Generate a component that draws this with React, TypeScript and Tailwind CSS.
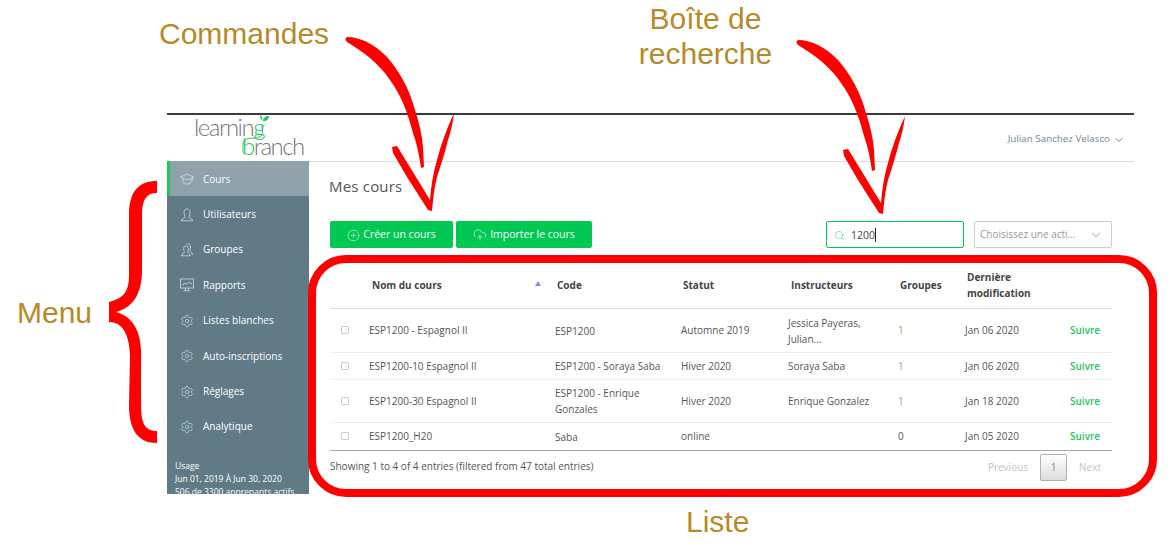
import { ChevronDown, CirclePlus, CloudUpload, Search, Settings } from "lucide-react";
import type { ReactNode } from "react";

function CapIcon() {
  return (
    <svg width="14" height="14" viewBox="0 0 14 14" fill="none" stroke="currentColor" strokeWidth="0.8">
      <path d="M0.5 5 L7 2 L13.5 5 L7 8 Z" />
      <path d="M3 6.5 V10.5 C5 12.5 9 12.5 11 10.5 V6.5" />
      <path d="M12.5 5.5 V8.5" />
    </svg>
  );
}

function UserIcon() {
  return (
    <svg width="14" height="14" viewBox="0 0 14 14" fill="none" stroke="currentColor" strokeWidth="0.8">
      <path d="M7 1 C4.8 1 4 2.6 4 4.5 C4 6.5 5 8 5 9 C5 10.5 1.5 10.5 1.2 12.8 H12.8 C12.5 10.5 9 10.5 9 9 C9 8 10 6.5 10 4.5 C10 2.6 9.2 1 7 1 Z" />
    </svg>
  );
}

function GroupIcon() {
  return (
    <svg width="14" height="14" viewBox="0 0 14 14" fill="none" stroke="currentColor" strokeWidth="0.8">
      <path d="M6 3 C4.2 3 3.6 4.3 3.6 5.8 C3.6 7.4 4.4 8 4.4 9.2 C4.4 10.4 1.8 10.4 1.4 12.8 H10.4 C10 10.4 7.6 10.4 7.6 9.2 C7.6 8 8.4 7.4 8.4 5.8 C8.4 4.3 7.8 3 6 3 Z" />
      <path d="M6.5 1.2 C7.2 0.8 10.6 0.6 10.6 4 C10.6 5.6 9.8 6.4 9.8 7.6 C9.8 8.8 12.2 9 12.7 11.4 H11.6" />
    </svg>
  );
}

function MonitorIcon() {
  return (
    <svg width="14" height="14" viewBox="0 0 14 14" fill="none" stroke="currentColor" strokeWidth="0.8">
      <rect x="0.5" y="1" width="13" height="9" />
      <path d="M2 7.5 L5 5 L7 6.5 L9 4 L12 6" />
      <path d="M5.5 10 V12.5 M8.5 10 V12.5 M3.5 12.8 H10.5" />
    </svg>
  );
}

const menu: [string, ReactNode][] = [
  ["Cours", <CapIcon />],
  ["Utilisateurs", <UserIcon />],
  ["Groupes", <GroupIcon />],
  ["Rapports", <MonitorIcon />],
  ["Listes blanches", <Settings size={14} strokeWidth={1.1} />],
  ["Auto-inscriptions", <Settings size={14} strokeWidth={1.1} />],
  ["Réglages", <Settings size={14} strokeWidth={1.1} />],
  ["Analytique", <Settings size={14} strokeWidth={1.1} />],
];

const rows = [
  { h: "h-[44px]", name: "ESP1200 - Espagnol II", code: "ESP1200", statut: "Automne 2019", inst: "Jessica Payeras, Julian...", groupes: "1", date: "Jan 06 2020" },
  { h: "h-[27px]", name: "ESP1200-10 Espagnol II", code: "ESP1200 - Soraya Saba", statut: "Hiver 2020", inst: "Soraya Saba", groupes: "1", date: "Jan 06 2020" },
  { h: "h-[43px]", name: "ESP1200-30 Espagnol II", code: "ESP1200 - Enrique Gonzales", statut: "Hiver 2020", inst: "Enrique Gonzalez", groupes: "1", date: "Jan 18 2020" },
  { h: "h-[28px]", name: "ESP1200_H20", code: "Saba", statut: "online", inst: "", groupes: "0", date: "Jan 05 2020" },
];

function Logo() {
  return (
    <svg width="116" height="46" viewBox="0 0 116 46" className="ml-[26px]">
      <text x="1" y="21" fontFamily="Lato" fontWeight="300" fontSize="24" letterSpacing="-1.5" fill="#777">
        learnin<tspan fill="#22c55e">g</tspan>
      </text>
      <text x="49" y="40" fontFamily="Lato" fontWeight="300" fontSize="24" letterSpacing="-1.5" fill="#777">
        <tspan fill="#22c55e">b</tspan>ranch
      </text>
      <path d="M69 10 C70 20 70 22 62 23 C55 23 50 24 50 30 V38" fill="none" stroke="#22c55e" strokeWidth="1" />
      <path d="M70 6 C70 3 72 1 76 1 C76 4 74 6 70 6 Z M69 5 C68 4 67 3 67 0 C69 1 70 3 69 5 Z" fill="#22c55e" />
    </svg>
  );
}

// same hand-drawn arrow for both callouts
function Arrow({ dx, dy }: { dx: number; dy: number }) {
  return (
    <g transform={`translate(${dx} ${dy})`} fill="#ff0000">
      <path d="M347 37 C354 37 361 39 367 42 C375 46 381 51 387 57 C393 64 398 71 403 80 C408 89 412 99 415 110 C419 122 422 135 423 147 L424 167 L421 168 C419 155 417 144 413 133 C410 122 407 112 403 103 C399 94 395 87 390 80 C384 71 377 64 370 58 C363 52 355 47 347 42 C345 40 345 38 347 37 Z" />
      <path d="M392 147 L397 146 L430 200 C431 187 433 173 437 160 C441 144 447 128 454 113 C453 122 451 131 448 140 C445 152 441 165 437 177 C434 188 433 200 432 211 L428 210 L407 177 L393 153 Z" />
    </g>
  );
}

export default function App() {
  return (
    <div className="relative h-[552px] w-[1175px] overflow-hidden bg-white font-['Open_Sans',sans-serif]">
      <div className="ml-[167px] w-[967px] pt-[113px]">
        <header className="flex h-[48px] items-center justify-between border-t-2 border-[#3a3a3a] pr-[9px]">
          <Logo />
          <div className="mt-[3px] flex items-center gap-[3px] text-[9.8px] text-[#6f8894]">
            Julian Sanchez Velasco
            <ChevronDown size={12} strokeWidth={1.5} className="text-[#555555]" />
          </div>
        </header>

        <div className="flex">
          <aside className="flex h-[333px] w-[142px] shrink-0 flex-col overflow-hidden bg-[#607a86] text-[10px] text-white">
            {menu.map(([label, icon], i) => (
              <div
                key={label}
                className={
                  i === 0
                    ? "flex h-[35.4px] shrink-0 items-center gap-[9px] border-l-[3px] border-[#22c55e] bg-[#8fa1aa] pl-[10px] pt-[1px]"
                    : "flex h-[35.4px] shrink-0 items-center gap-[9px] pl-[13px] pt-[1px]"
                }
              >
                <span className="text-[#d5dde1]">{icon}</span>
                {label}
              </div>
            ))}
            <div className="mt-[15px] pl-[8px] text-[8.5px] leading-[13px]">
              <p>Usage</p>
              <p>Jun 01, 2019 À Jun 30, 2020</p>
              <p>506 de 3300 apprenants actifs</p>
            </div>
          </aside>

          <main className="h-[333px] flex-1 border-t border-[#dddddd] pl-[21px] pr-[22px]">
            <h1 className="ml-[-1px] mt-[14px] text-[15px] leading-[20px] tracking-[0.2px] text-[#555555]">Mes cours</h1>

            <div className="mt-[25px] flex items-center justify-between">
              <div className="flex gap-[3px] text-[10.5px] text-white">
                <button className="flex h-[27px] w-[123px] items-center justify-center gap-[3px] rounded-[2px] bg-[#00c853] pt-[1px]">
                  <CirclePlus size={13} strokeWidth={1} />
                  Créer un cours
                </button>
                <button className="flex h-[27px] w-[136px] items-center justify-center gap-[3px] rounded-[2px] bg-[#00c853] pt-[1px]">
                  <CloudUpload size={14} strokeWidth={1} />
                  Importer le cours
                </button>
              </div>
              <div className="flex items-center gap-[10px] text-[10.5px]">
                <div className="flex h-[27px] w-[138px] items-center gap-[6px] rounded-[2px] border border-[#00c853] pl-[7px] pt-[1px] text-[#444444]">
                  <Search size={11} strokeWidth={1.2} className="text-[#34d07a]" />
                  <span className="border-r border-[#222222] leading-[14px]">1200</span>
                </div>
                <div className="flex h-[27px] w-[138px] items-center justify-between rounded-[2px] border border-[#cccccc] pl-[5px] pr-[8px] text-[10px] text-[#999999]">
                  Choisissez une acti...
                  <ChevronDown size={14} strokeWidth={1} className="text-[#555555]" />
                </div>
              </div>
            </div>

            <table className="mt-[8px] w-[782px] table-fixed border-b border-[#aaaaaa] text-left text-[10px] text-[#555555]">
              <colgroup>
                <col className="w-[30px]" />
                <col className="w-[186px]" />
                <col className="w-[126px]" />
                <col className="w-[107px]" />
                <col className="w-[110px]" />
                <col className="w-[67px]" />
                <col className="w-[105px]" />
                <col className="w-[51px]" />
              </colgroup>
              <thead>
                <tr className="h-[52px] border-b border-[#dddddd] text-[#444444]">
                  <th />
                  <th className="pl-[12px] pt-[8px] font-bold">
                    <div className="flex items-center justify-between pr-[5px]">
                      Nom du cours
                      <span className="mb-[4px] h-0 w-0 border-x-[3px] border-b-[5px] border-x-transparent border-b-[#8a8ad8]" />
                    </div>
                  </th>
                  <th className="pl-[11px] pt-[8px] font-bold">Code</th>
                  <th className="pl-[11px] pt-[8px] font-bold">Statut</th>
                  <th className="pl-[12px] pt-[8px] font-bold">Instructeurs</th>
                  <th className="pl-[11px] pt-[8px] font-bold">Groupes</th>
                  <th className="pl-[11px] pt-[8px] font-bold leading-[15.5px]">
                    Dernière
                    <br />
                    modification
                  </th>
                  <th />
                </tr>
              </thead>
              <tbody>
                {rows.map((r, i) => (
                  <tr key={r.name} className={i === 3 ? r.h : `${r.h} border-b border-[#eeeeee]`}>
                    <td className="pl-[11px]">
                      <div className="h-[8px] w-[8px] rounded-[1px] border border-[#cccccc]" />
                    </td>
                    <td className="pl-[9px] pt-[1px]">{r.name}</td>
                    <td className="pl-[9px] pt-[1px] leading-[16px]">{r.code}</td>
                    <td className="pl-[9px] pt-[1px]">{r.statut}</td>
                    <td className="pl-[9px] pt-[1px] leading-[16px]">{r.inst}</td>
                    <td className={r.groupes === "1" ? "pl-[9px] pt-[1px] text-[#b9975b]" : "pl-[9px] pt-[1px]"}>{r.groupes}</td>
                    <td className="pl-[9px] pt-[1px]">{r.date}</td>
                    <td className="pl-[9px] pt-[1px] font-semibold text-[#22c55e]">Suivre</td>
                  </tr>
                ))}
              </tbody>
            </table>

            <div className="mt-[3px] flex items-center justify-between text-[10px]">
              <p className="mb-[2px] text-[#555555]">Showing 1 to 4 of 4 entries (filtered from 47 total entries)</p>
              <div className="flex items-center gap-[12px] pr-[11px] text-[#c4c4c4]">
                <span>Previous</span>
                <span className="flex h-[27px] w-[27px] items-center justify-center rounded-[2px] border border-[#b0b0b0] bg-gradient-to-b from-white to-[#dcdcdc] text-[#6f8894]">
                  1
                </span>
                <span>Next</span>
              </div>
            </div>
          </main>
        </div>
      </div>

      <p className="absolute left-[159px] top-[16px] font-['Liberation_Sans',sans-serif] text-[30px] leading-[35px] text-[#b58a28]">
        Commandes
      </p>
      <p className="absolute left-[638px] top-[1px] w-[135px] text-center font-['Liberation_Sans',sans-serif] text-[30px] leading-[35px] text-[#b58a28]">
        Boîte de recherche
      </p>
      <p className="absolute left-[17px] top-[295px] font-['Liberation_Sans',sans-serif] text-[30px] leading-[35px] text-[#b58a28]">
        Menu
      </p>
      <p className="absolute left-[686px] top-[504px] font-['Liberation_Sans',sans-serif] text-[30px] leading-[35px] text-[#b58a28]">
        Liste
      </p>

      <div className="absolute left-[308px] top-[255px] h-[242px] w-[849px] rounded-[38px] border-[8px] border-[#ff0000]" />

      <svg width="1175" height="552" viewBox="0 0 1175 552" className="pointer-events-none absolute left-0 top-0">
        <Arrow dx={0} dy={0} />
        <Arrow dx={451} dy={3} />
        <path
          d="M157 181 C140 181 129 190 129 215 L129 275 C129 290 125 298 109 302 L109 322 C122 322 129 333 130 355 L129 405 C129 430 138 443 157 443 L157 431 C146 431 141 425 141 405 L141 350 C140 325 128 315 116 312 C130 308 142 298 142 270 L142 215 C142 200 146 193 157 193 Z"
          fill="#ff0000"
        />
      </svg>
    </div>
  );
}
